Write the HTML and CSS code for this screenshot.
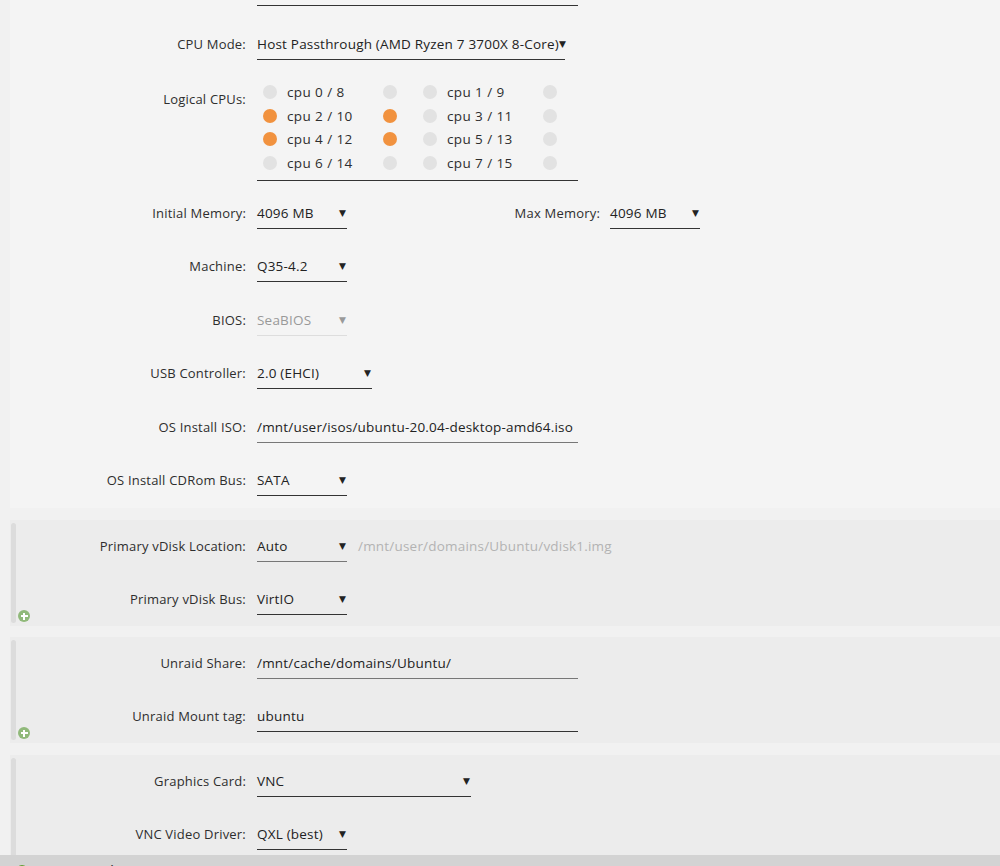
FILE: index.html
```html
<!DOCTYPE html>
<html lang="en">
<head>
    <meta charset="UTF-8">
    <meta name="viewport" content="width=device-width, initial-scale=1.0">
    <title>Add VM</title>
    <link rel="stylesheet" href="styles.css">
</head>
<body>
    <div class="form">
        <section class="block main">
            <div class="row first">
                <div class="label"></div>
                <div class="input text wide"></div>
            </div>

            <div class="row">
                <div class="label">CPU Mode:</div>
                <div class="input select cpumode"><span>Host Passthrough (AMD Ryzen 7 3700X 8-Core)</span><span class="arrow">&#9660;</span></div>
            </div>

            <div class="row cpus">
                <div class="label cpus-label">Logical CPUs:</div>
                <div class="cpu-grid">
                    <div class="cpu"><span class="dot"></span><span class="cpu-name">cpu 0 / 8</span><span class="dot"></span></div>
                    <div class="cpu"><span class="dot"></span><span class="cpu-name">cpu 1 / 9</span><span class="dot"></span></div>
                    <div class="cpu"><span class="dot on"></span><span class="cpu-name">cpu 2 / 10</span><span class="dot on"></span></div>
                    <div class="cpu"><span class="dot"></span><span class="cpu-name">cpu 3 / 11</span><span class="dot"></span></div>
                    <div class="cpu"><span class="dot on"></span><span class="cpu-name">cpu 4 / 12</span><span class="dot on"></span></div>
                    <div class="cpu"><span class="dot"></span><span class="cpu-name">cpu 5 / 13</span><span class="dot"></span></div>
                    <div class="cpu"><span class="dot"></span><span class="cpu-name">cpu 6 / 14</span><span class="dot"></span></div>
                    <div class="cpu"><span class="dot"></span><span class="cpu-name">cpu 7 / 15</span><span class="dot"></span></div>
                </div>
            </div>

            <div class="row after-cpus">
                <div class="label">Initial Memory:</div>
                <div class="input select narrow"><span>4096 MB</span><span class="arrow">&#9660;</span></div>
                <div class="label second">Max Memory:</div>
                <div class="input select narrow"><span>4096 MB</span><span class="arrow">&#9660;</span></div>
            </div>

            <div class="row">
                <div class="label">Machine:</div>
                <div class="input select narrow"><span>Q35-4.2</span><span class="arrow">&#9660;</span></div>
            </div>

            <div class="row">
                <div class="label">BIOS:</div>
                <div class="input select narrow disabled"><span>SeaBIOS</span><span class="arrow">&#9660;</span></div>
            </div>

            <div class="row">
                <div class="label">USB Controller:</div>
                <div class="input select usb"><span>2.0 (EHCI)</span><span class="arrow">&#9660;</span></div>
            </div>

            <div class="row">
                <div class="label">OS Install ISO:</div>
                <div class="input text wide soft">/mnt/user/isos/ubuntu-20.04-desktop-amd64.iso</div>
            </div>

            <div class="row">
                <div class="label">OS Install CDRom Bus:</div>
                <div class="input select narrow"><span>SATA</span><span class="arrow">&#9660;</span></div>
            </div>
        </section>

        <section class="block group">
            <div class="row">
                <div class="label">Primary vDisk Location:</div>
                <div class="input select narrow soft"><span>Auto</span><span class="arrow">&#9660;</span></div>
                <div class="hint">/mnt/user/domains/Ubuntu/vdisk1.img</div>
            </div>
            <div class="row">
                <div class="label">Primary vDisk Bus:</div>
                <div class="input select narrow"><span>VirtIO</span><span class="arrow">&#9660;</span></div>
            </div>
            <span class="add"></span>
        </section>

        <section class="block group">
            <div class="row">
                <div class="label">Unraid Share:</div>
                <div class="input text wide soft">/mnt/cache/domains/Ubuntu/</div>
            </div>
            <div class="row">
                <div class="label">Unraid Mount tag:</div>
                <div class="input text wide">ubuntu</div>
            </div>
            <span class="add"></span>
        </section>

        <section class="block group open">
            <div class="row">
                <div class="label">Graphics Card:</div>
                <div class="input select gpu"><span>VNC</span><span class="arrow">&#9660;</span></div>
            </div>
            <div class="row">
                <div class="label">VNC Video Driver:</div>
                <div class="input select narrow"><span>QXL (best)</span><span class="arrow">&#9660;</span></div>
            </div>
        </section>
    </div>

    <footer class="footer">
        <span class="status-dot"></span>
        <span class="status-text">Array Started</span>
    </footer>
</body>
</html>
```

FILE: styles.css
```css
body {
    margin: 0;
    background-color: #f1f1f1;
    font-family: "Open Sans", "Liberation Sans", sans-serif;
    font-size: 13.5px;
    letter-spacing: 0.2px;
    color: #222;
    overflow: hidden;
}
.form {
    margin-top: -21px;
}
.block {
    margin-left: 10px;
    background-color: #f4f4f4;
    position: relative;
}
.main {
    padding-bottom: 12px;
}
.group {
    background-color: #ececec;
    margin-top: 11px;
    padding: 14.5px 0 11px;
}
.main + .group {
    margin-top: 12px;
}
.group.open {
    margin-top: 12px;
    padding-bottom: 40px;
}
/* grey handle on the left of each collapsible group */
.group::before {
    content: "";
    position: absolute;
    left: 1px;
    top: 3px;
    bottom: 3px;
    width: 5px;
    border-radius: 3px;
    background-color: #dcdcdc;
}
.add {
    position: absolute;
    left: 8px;
    bottom: 4px;
    width: 12px;
    height: 12px;
    border-radius: 50%;
    background-color: #90b97a;
}
.add::before,
.add::after {
    content: "";
    position: absolute;
    background-color: #fff;
}
.add::before {
    left: 2.5px;
    right: 2.5px;
    top: 5px;
    height: 2px;
}
.add::after {
    top: 2.5px;
    bottom: 2.5px;
    left: 5px;
    width: 2px;
}
.row {
    display: flex;
    align-items: flex-start;
    margin-top: 26.5px;
}
.row.first {
    margin-top: 0;
}
.group .row:first-child {
    margin-top: 0;
}
.label {
    width: 236px;
    padding-right: 11px;
    text-align: right;
    font-size: 13px;
    line-height: 22px;
    height: 22px;
    color: #2e2e2e;
    flex-shrink: 0;
}
.label.second {
    width: 253px;
    padding-right: 10px;
}
.input {
    box-sizing: border-box;
    line-height: 22px;
    padding-bottom: 4px;
    border-bottom: 1px solid #333;
    height: 27px;
    white-space: nowrap;
}
.input.soft {
    border-bottom-color: #777;
}
.select {
    display: flex;
    justify-content: space-between;
}
.arrow {
    font-family: "DejaVu Sans", sans-serif;
    font-size: 9px;
    letter-spacing: 0;
    padding-right: 1px;
    flex-shrink: 0;
}
.wide {
    width: 321px;
}
.narrow {
    width: 90px;
}
.usb {
    width: 115px;
}
.gpu {
    width: 214px;
}
.cpumode {
    width: 308px;
}
.disabled {
    color: #999;
    border-bottom-color: #ddd;
}
.hint {
    margin-left: 11px;
    line-height: 22px;
    color: #b3b3b3;
}
.row.cpus {
    margin-top: 20.5px;
}
.row.after-cpus {
    margin-top: 21px;
}
.cpus-label {
    padding-top: 8px;
}
.cpu-grid {
    display: grid;
    grid-template-columns: 160px 160px;
    width: 321px;
    padding-bottom: 5px;
    border-bottom: 1px solid #333;
}
.cpu {
    display: flex;
    align-items: center;
    height: 23.7px;
    padding-left: 6px;
}
.cpu-name {
    width: 96px;
    padding-left: 10px;
    letter-spacing: 0.4px;
    color: #2e2e2e;
}
.dot {
    width: 14px;
    height: 14px;
    border-radius: 50%;
    background-color: #e2e2e2;
    flex-shrink: 0;
}
.dot.on {
    background-color: #f1923f;
}
.footer {
    position: fixed;
    left: 0;
    right: 0;
    bottom: -20px;
    height: 31px;
    background-color: #d3d3d3;
    display: flex;
    align-items: center;
    padding-left: 16px;
    font-size: 12px;
    font-weight: 600;
    color: #3a3a3a;
}
.status-dot {
    width: 12px;
    height: 12px;
    border-radius: 50%;
    background-color: #5f9e2e;
    margin-right: 6px;
}
```
